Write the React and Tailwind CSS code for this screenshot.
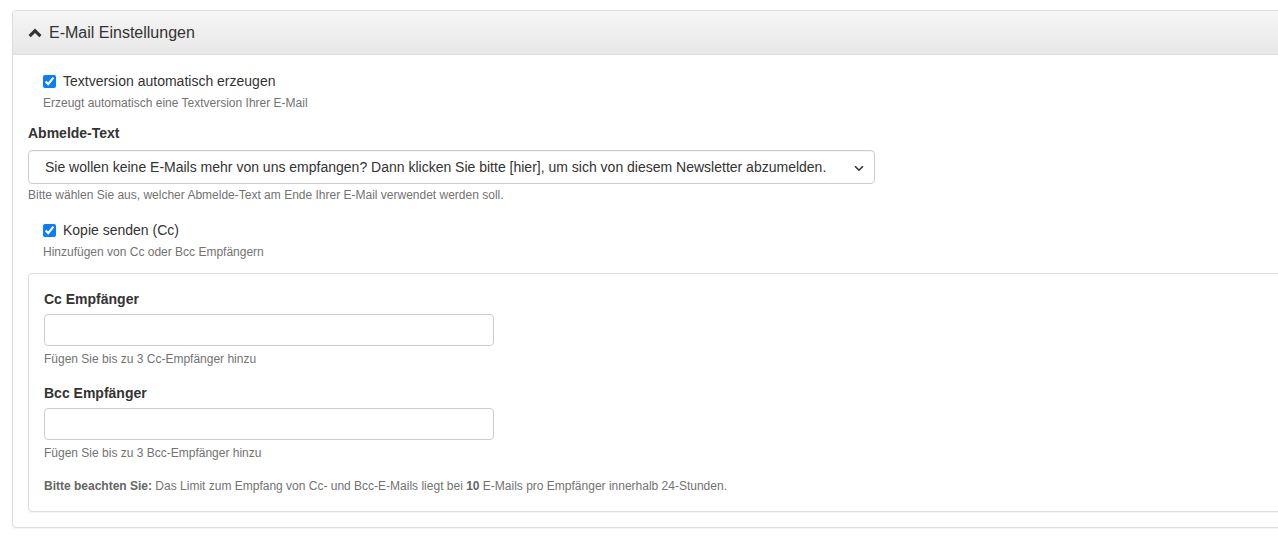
import { useState } from 'react';

const ChevronUp = () => (
  <svg width="14" height="10" viewBox="0 0 14 10" className="shrink-0">
    <path d="M7 0.5 L13.5 7 L11.3 9.2 L7 4.9 L2.7 9.2 L0.5 7 Z" fill="#333" />
  </svg>
);

const CheckRow = ({ label, help, checked, onChange }) => (
  <div className="pl-[15px]">
    <label className="flex items-center h-5 text-[14px] text-[#333] cursor-pointer">
      <input
        type="checkbox"
        checked={checked}
        onChange={onChange}
        className="w-[13px] h-[13px] m-0 mr-[7px] accent-[#0a7cff]"
      />
      {label}
    </label>
    <p className="mt-[4px] text-[12px] leading-[17px] text-[#737373]">{help}</p>
  </div>
);

const App = () => {
  const [textVersion, setTextVersion] = useState(true);
  const [sendCopy, setSendCopy] = useState(true);
  const [open, setOpen] = useState(true);

  return (
    <div
      className="w-full h-[542px] overflow-hidden bg-white pt-[10px] pl-[12px]"
      style={{ fontFamily: '"Liberation Sans", Arial, sans-serif' }}
    >
      <div className="w-[1300px] border border-[#ddd] rounded-[4px] bg-white shadow-[0_1px_1px_rgba(0,0,0,0.05)]">
        <button
          onClick={() => setOpen(!open)}
          className="w-full h-[44px] flex items-center gap-[7px] pl-[15px] bg-gradient-to-b from-[#f5f5f5] to-[#e8e8e8] border-b border-[#ddd] rounded-t-[4px] text-[16px] text-[#333] text-left"
        >
          <ChevronUp />
          E-Mail Einstellungen
        </button>

        {open && (
          <div className="px-[15px] pt-[16px] pb-[15px]">
            <CheckRow
              label="Textversion automatisch erzeugen"
              help="Erzeugt automatisch eine Textversion Ihrer E-Mail"
              checked={textVersion}
              onChange={() => setTextVersion(!textVersion)}
            />

            <div className="mt-[11px]">
              <label className="block h-5 leading-5 text-[14px] font-bold text-[#333]">Abmelde-Text</label>
              <div className="relative mt-[7px] w-[847px] h-[34px] border border-[#ccc] rounded-[4px] bg-white flex items-center pl-[16px] text-[14px] text-[#333] shadow-[inset_0_1px_1px_rgba(0,0,0,0.04)]">
                Sie wollen keine E-Mails mehr von uns empfangen? Dann klicken Sie bitte [hier], um sich von diesem Newsletter abzumelden.
                <svg width="10" height="7" viewBox="0 0 10 7" className="absolute right-[10px] top-[14px]">
                  <path d="M1 1.2 L5 5.2 L9 1.2" fill="none" stroke="#333" strokeWidth="1.6" />
                </svg>
              </div>
              <p className="mt-[3px] text-[12px] leading-[17px] text-[#737373]">
                Bitte wählen Sie aus, welcher Abmelde-Text am Ende Ihrer E-Mail verwendet werden soll.
              </p>
            </div>

            <div className="mt-[16px]">
              <CheckRow
                label="Kopie senden (Cc)"
                help="Hinzufügen von Cc oder Bcc Empfängern"
                checked={sendCopy}
                onChange={() => setSendCopy(!sendCopy)}
              />
            </div>

            <div className="mt-[12px] border border-[#ddd] rounded-[4px] px-[15px] pt-[15px] pb-[16px] shadow-[0_1px_1px_rgba(0,0,0,0.05)]">
              <label className="block h-5 leading-5 text-[14px] font-bold text-[#333]">Cc Empfänger</label>
              <input
                type="text"
                className="block mt-[5px] w-[450px] h-[32px] border border-[#ccc] rounded-[4px] px-3 text-[14px] outline-none"
              />
              <p className="mt-[5px] text-[12px] leading-[17px] text-[#737373]">Fügen Sie bis zu 3 Cc-Empfänger hinzu</p>

              <label className="block mt-[15px] h-5 leading-5 text-[14px] font-bold text-[#333]">Bcc Empfänger</label>
              <input
                type="text"
                className="block mt-[5px] w-[450px] h-[32px] border border-[#ccc] rounded-[4px] px-3 text-[14px] outline-none"
              />
              <p className="mt-[5px] text-[12px] leading-[17px] text-[#737373]">Fügen Sie bis zu 3 Bcc-Empfänger hinzu</p>

              <p className="mt-[16px] text-[12px] leading-[17px] text-[#737373]">
                <strong className="text-[#666]">Bitte beachten Sie:</strong> Das Limit zum Empfang von Cc- und Bcc-E-Mails liegt bei <strong className="text-[#666]">10</strong> E-Mails pro Empfänger innerhalb 24-Stunden.
              </p>
            </div>
          </div>
        )}
      </div>
    </div>
  );
};

export default App;
